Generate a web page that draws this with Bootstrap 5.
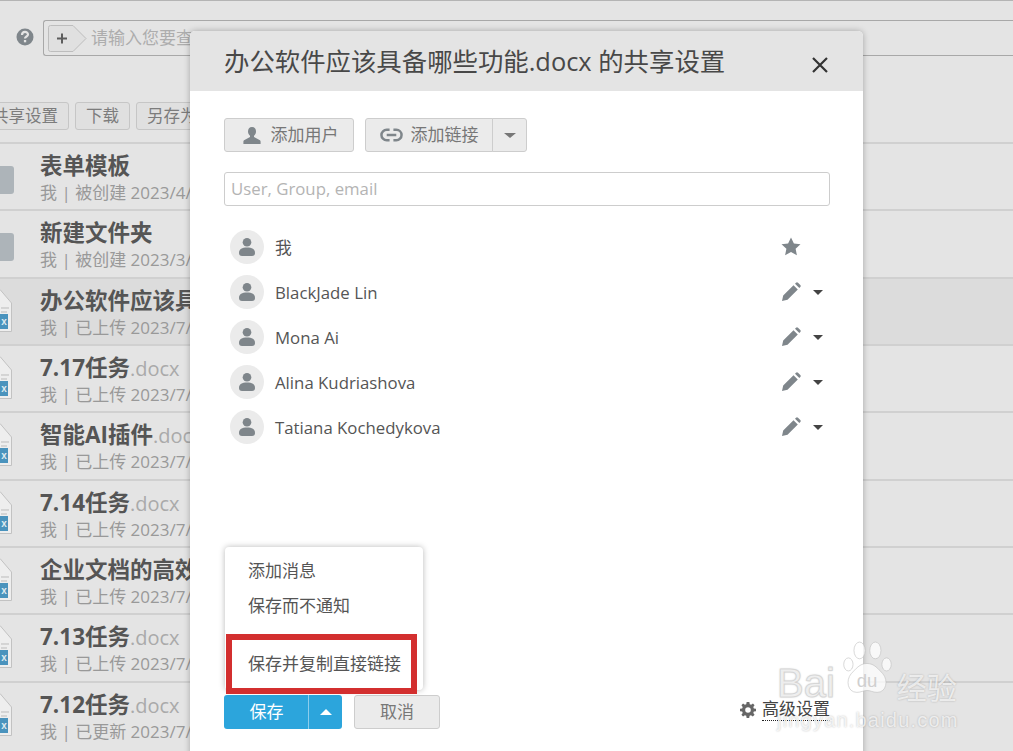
<!DOCTYPE html>
<html lang="zh-CN"><head><meta charset="utf-8"><title>共享设置</title>
<link rel="stylesheet" href="https://cdn.jsdelivr.net/npm/bootstrap@5.3.0/dist/css/bootstrap.min.css">
<style>
html,body{height:751px;overflow:hidden}
body{background:#e4e4e4;font-family:"Open Sans","Noto Sans CJK SC",sans-serif;color:#555;position:relative;border-top:1px solid #b4b4b4}
.ink{fill:#7f868b}
.searchbar{height:55px;padding-top:19px;padding-left:16px;gap:9px}
.helpicon{width:18px;height:18px;flex:none;margin-top:8px}
.searchbox{flex:1;height:36px;border:1px solid #a8a8a8;border-right:0;border-radius:3px 0 0 3px;padding:4px 4px;gap:3px;color:#adadad;font-size:17px;white-space:nowrap}
.tagplus{width:40px;height:27px;flex:none}
.toolbar{height:86px;padding-top:46px;gap:6px;margin-left:-19px}
.toolbtn{height:28px;padding:0 10px;font-size:16.5px;line-height:26px;background:#e0e0e0;border:1px solid #c6c6c6;border-radius:3px;color:#7c7c7c}
.filerow{height:67.33px;border-top:2px solid #d0d0d0;padding-left:40px;position:relative;overflow:hidden}
.filerow.picked{background:#dcdcdc}
.filename{font-size:22.5px;font-weight:700;line-height:30px;color:#555;padding-top:7px;height:39px;white-space:nowrap}
.filename span{font-weight:400;color:#aaa;font-size:20px}
.filemeta{font-size:17px;line-height:20px;color:#999;white-space:nowrap}
.fileglyph{position:absolute;left:-8px;top:10px;width:20px;height:43px}
.folderglyph{position:absolute;left:-6px;top:22px;width:20px;height:28px;border-radius:3px;background:#adb4b9}
.sharebox{position:absolute;left:190px;top:30px;width:673px;height:730px;background:#fff;border-radius:5px 5px 0 0;box-shadow:0 0 6px rgba(0,0,0,.28);display:flex;flex-direction:column}
.sharehead{height:60px;background:#e4e4e4;border-radius:5px 5px 0 0;padding:0 33px 0 34px;color:#444}
.sharetitle{font-size:25.4px;font-weight:400;margin:0;white-space:nowrap;color:#484848}
.xbtn{width:20px;height:20px;padding:0;background:none;border:0}
.sharebody{padding:27px 33px 0 34px;position:relative;flex:1}
.greybtn{height:34px;background:#ebebeb;border:1px solid #cdcdcd;border-radius:3px;color:#777;font-size:17px;padding:0 12px;line-height:30px;display:inline-flex;align-items:center;gap:8px;--bs-btn-hover-bg:#ebebeb;--bs-btn-hover-color:#777}
.userbtn{width:130px;justify-content:center;gap:10px;padding-left:15px}
.addtools{gap:11px}
.peoplefield{height:34px;margin-top:20px;width:606px;border:1px solid #cdcdcd;border-radius:3px;font-size:16.8px;padding:0 6px 2px;color:#555}
.peoplefield::placeholder{color:#b4b4b4}
.people{margin-top:18px;width:606px}
.person{height:45px;padding-left:6px;gap:11px;font-size:16.8px;color:#555}
.person>span{padding-top:2px}
.avatarcircle{width:34px;height:34px;border-radius:50%;background:#ebebeb;flex:none;display:flex;align-items:center;justify-content:center}
.rolebox{margin-left:auto;width:49px;gap:12px;display:flex;align-items:center}
.rolebox .caretdown{padding:0;margin-top:2px}
.caretdown{border-left:5.5px solid transparent;border-right:5.5px solid transparent;border-top:5.5px solid #444;width:0;height:0}
.carethalf{border-left:6px solid transparent;border-right:6px solid transparent;border-top:5px solid #777;width:0;height:0}
.caretup{border-left:6px solid transparent;border-right:6px solid transparent;border-bottom:6px solid #fff;width:0;height:0}
.bottombar{position:absolute;left:34px;right:33px;top:604px;height:34px}
.savebtn{height:34px;background:#2ca5dc;border:0;color:#fff;font-size:17px;border-radius:3px;--bs-btn-hover-bg:#2ca5dc;--bs-btn-hover-color:#fff}
.savemain{width:85px;padding:0}
.savesplit{width:34px;padding:0;border-left:1px solid #8ccdec;display:flex;align-items:center;justify-content:center}
.savemenu{display:block;position:absolute;left:35px;top:456px;width:198px;height:143px;border:0;border-radius:4px;box-shadow:0 0 6px rgba(0,0,0,.28);padding:6px 0;margin:0;min-width:0}
.saveitem{height:35px;line-height:35px;padding:0 23px;font-size:17px;color:#555;white-space:nowrap}
.redframe{position:absolute;left:36px;top:543px;width:191px;height:60px;border:6px solid #d32f2f;pointer-events:none;z-index:1001}
.advlink{margin-left:auto;font-size:17px;color:#444;gap:6px;margin-top:3px}
.advlink span{border-bottom:1px dotted #222;line-height:22px}
.baidumark{position:absolute;left:777px;top:638px;width:190px;color:rgba(255,255,255,.72);pointer-events:none;text-shadow:0 0 2px rgba(0,0,0,.25);font-family:"Liberation Sans",sans-serif;z-index:1002}
.markrow{height:62px;align-items:flex-end}
.markword{font-size:40px;line-height:1;margin-bottom:-2px;-webkit-text-stroke:1px rgba(205,205,205,.7)}
.markcn{font-size:30px;line-height:1;font-family:"Noto Sans CJK SC",sans-serif;margin-left:3px}
.markpaw{margin-left:5px}
.markurl{font-size:20px;line-height:1;letter-spacing:1.2px;margin-top:9px;white-space:nowrap}
</style></head><body>

<div class="d-flex searchbar">
  <svg class="helpicon" viewBox="0 0 18 18"><circle class="ink" cx="9" cy="9" r="8.500"/><path d="M6 7c0-4 6-4 6-.5 0 2-3 2-3 4" fill="none" stroke="#e4e4e4" stroke-width="2.200"/><rect x="7.900" y="12" width="2.300" height="2.300" fill="#e4e4e4"/></svg>
  <div class="d-flex align-items-center searchbox">
    <svg class="tagplus" viewBox="0 0 40 27"><path d="M2.500 .5H25L38 13.500 25 26.500H2.500a2 2 0 0 1-2-2V2.500a2 2 0 0 1 2-2z" fill="#e0e0e0" stroke="#bdbdbd"/><path d="M9 13.500h10M14 8.500v10" stroke="#5d5d5d" stroke-width="2"/></svg>
    <span>请输入您要查</span>
  </div>
</div>
<div class="d-flex toolbar">
  <div class="toolbtn">共享设置</div><div class="toolbtn">下载</div><div class="toolbtn">另存为</div>
</div>

<div class="filerow"><div class="folderglyph"></div><div class="filename">表单模板</div><div class="filemeta">我 | 被创建 2023/4/</div></div>
<div class="filerow"><div class="folderglyph"></div><div class="filename">新建文件夹</div><div class="filemeta">我 | 被创建 2023/3/</div></div>
<div class="filerow picked"><svg class="fileglyph" viewBox="0 0 20 43"><path d="M8 .5L19.500 14V42.500H0V.5z" fill="#eee" stroke="#c2c2c2"/><path d="M9 19h8M9 23h6" stroke="#bbb"/><rect x="0" y="25" width="16" height="15" fill="#4a93bd"/><text x="12" y="36" font-size="10" font-weight="700" fill="#dfeaf0" text-anchor="middle" font-family="Liberation Sans">x</text></svg><div class="filename">办公软件应该具备</div><div class="filemeta">我 | 已上传 2023/7/</div></div>
<div class="filerow"><svg class="fileglyph" viewBox="0 0 20 43"><path d="M8 .5L19.500 14V42.500H0V.5z" fill="#eee" stroke="#c2c2c2"/><path d="M9 19h8M9 23h6" stroke="#bbb"/><rect x="0" y="25" width="16" height="15" fill="#4a93bd"/><text x="12" y="36" font-size="10" font-weight="700" fill="#dfeaf0" text-anchor="middle" font-family="Liberation Sans">x</text></svg><div class="filename">7.17任务<span>.docx</span></div><div class="filemeta">我 | 已上传 2023/7/</div></div>
<div class="filerow"><svg class="fileglyph" viewBox="0 0 20 43"><path d="M8 .5L19.500 14V42.500H0V.5z" fill="#eee" stroke="#c2c2c2"/><path d="M9 19h8M9 23h6" stroke="#bbb"/><rect x="0" y="25" width="16" height="15" fill="#4a93bd"/><text x="12" y="36" font-size="10" font-weight="700" fill="#dfeaf0" text-anchor="middle" font-family="Liberation Sans">x</text></svg><div class="filename">智能AI插件<span>.docx</span></div><div class="filemeta">我 | 已上传 2023/7/</div></div>
<div class="filerow"><svg class="fileglyph" viewBox="0 0 20 43"><path d="M8 .5L19.500 14V42.500H0V.5z" fill="#eee" stroke="#c2c2c2"/><path d="M9 19h8M9 23h6" stroke="#bbb"/><rect x="0" y="25" width="16" height="15" fill="#4a93bd"/><text x="12" y="36" font-size="10" font-weight="700" fill="#dfeaf0" text-anchor="middle" font-family="Liberation Sans">x</text></svg><div class="filename">7.14任务<span>.docx</span></div><div class="filemeta">我 | 已上传 2023/7/</div></div>
<div class="filerow"><svg class="fileglyph" viewBox="0 0 20 43"><path d="M8 .5L19.500 14V42.500H0V.5z" fill="#eee" stroke="#c2c2c2"/><path d="M9 19h8M9 23h6" stroke="#bbb"/><rect x="0" y="25" width="16" height="15" fill="#4a93bd"/><text x="12" y="36" font-size="10" font-weight="700" fill="#dfeaf0" text-anchor="middle" font-family="Liberation Sans">x</text></svg><div class="filename">企业文档的高效管理</div><div class="filemeta">我 | 已上传 2023/7/</div></div>
<div class="filerow"><svg class="fileglyph" viewBox="0 0 20 43"><path d="M8 .5L19.500 14V42.500H0V.5z" fill="#eee" stroke="#c2c2c2"/><path d="M9 19h8M9 23h6" stroke="#bbb"/><rect x="0" y="25" width="16" height="15" fill="#4a93bd"/><text x="12" y="36" font-size="10" font-weight="700" fill="#dfeaf0" text-anchor="middle" font-family="Liberation Sans">x</text></svg><div class="filename">7.13任务<span>.docx</span></div><div class="filemeta">我 | 已上传 2023/7/</div></div>
<div class="filerow"><svg class="fileglyph" viewBox="0 0 20 43"><path d="M8 .5L19.500 14V42.500H0V.5z" fill="#eee" stroke="#c2c2c2"/><path d="M9 19h8M9 23h6" stroke="#bbb"/><rect x="0" y="25" width="16" height="15" fill="#4a93bd"/><text x="12" y="36" font-size="10" font-weight="700" fill="#dfeaf0" text-anchor="middle" font-family="Liberation Sans">x</text></svg><div class="filename">7.12任务<span>.docx</span></div><div class="filemeta">我 | 已更新 2023/7/</div></div>

<div class="sharebox">
  <div class="d-flex align-items-center justify-content-between sharehead">
    <h5 class="sharetitle">办公软件应该具备哪些功能.docx 的共享设置</h5>
    <button class="xbtn" aria-label="关闭"><svg viewBox="0 0 20 20" width="20" height="20"><path d="M3 3l14 14M17 3L3 17" stroke="#333" stroke-width="2.200"/></svg></button>
  </div>
  <div class="sharebody">
    <div class="d-flex addtools">
      <button class="btn greybtn userbtn"><svg width="18" height="17" viewBox="0 0 18 17"><path class="ink" d="M9 0c2.600 0 4 2 4 4.500 0 2-1 3.500-2 4.200v1.300l5.500 3c.8.400 1.100 1 1.100 1.700V17H.4v-2.300c0-.7.300-1.300 1.100-1.700L7 10V8.700C6 8 5 6.500 5 4.500 5 2 6.400 0 9 0z"/></svg>添加用户</button>
      <div class="btn-group">
        <button class="btn greybtn" style="width:128px;justify-content:center"><svg width="23" height="14" viewBox="0 0 24 14"><path d="M10 1.500H7a5.500 5.500 0 0 0 0 11h3M14 1.500h3a5.500 5.500 0 0 1 0 11h-3M7 7h10" fill="none" stroke="#7f868b" stroke-width="2.600"/></svg>添加链接</button>
        <button class="btn greybtn" style="width:35px;padding:0;justify-content:center" aria-label="更多"><span class="carethalf"></span></button>
      </div>
    </div>
    <input class="form-control peoplefield" placeholder="User, Group, email">
    <div class="people">
      <div class="d-flex align-items-center person"><div class="avatarcircle"><svg width="16" height="18" viewBox="0 0 16 18"><circle class="ink" cx="8" cy="4.300" r="4.300"/><path class="ink" d="M0 15c0-4 3-5.500 8-5.500s8 1.500 8 5.500c0 2-1 3-3 3H3c-2 0-3-1-3-3z"/></svg></div><span>我</span><div class="rolebox"><svg width="20" height="19" viewBox="0 0 20 19"><path class="ink" d="M10 .5l2.900 6 6.600.8-4.900 4.500 1.300 6.500L10 15.100 4.100 18.300l1.300-6.500L.5 7.300l6.600-.8z"/></svg></div></div>
      <div class="d-flex align-items-center person"><div class="avatarcircle"><svg width="16" height="18" viewBox="0 0 16 18"><circle class="ink" cx="8" cy="4.300" r="4.300"/><path class="ink" d="M0 15c0-4 3-5.500 8-5.500s8 1.500 8 5.500c0 2-1 3-3 3H3c-2 0-3-1-3-3z"/></svg></div><span>BlackJade Lin</span><div class="rolebox"><svg width="20" height="20" viewBox="0 0 20 20"><path class="ink" d="M1 19l1.200-5.500L12.500 3.200l4.300 4.300L6.500 17.800zM14 1.700l1-1a1.500 1.500 0 0 1 2 0l2.300 2.300a1.500 1.500 0 0 1 0 2l-1 1z"/></svg><span class="caretdown"></span></div></div>
      <div class="d-flex align-items-center person"><div class="avatarcircle"><svg width="16" height="18" viewBox="0 0 16 18"><circle class="ink" cx="8" cy="4.300" r="4.300"/><path class="ink" d="M0 15c0-4 3-5.500 8-5.500s8 1.500 8 5.500c0 2-1 3-3 3H3c-2 0-3-1-3-3z"/></svg></div><span>Mona Ai</span><div class="rolebox"><svg width="20" height="20" viewBox="0 0 20 20"><path class="ink" d="M1 19l1.200-5.500L12.500 3.200l4.300 4.300L6.500 17.800zM14 1.700l1-1a1.500 1.500 0 0 1 2 0l2.300 2.300a1.500 1.500 0 0 1 0 2l-1 1z"/></svg><span class="caretdown"></span></div></div>
      <div class="d-flex align-items-center person"><div class="avatarcircle"><svg width="16" height="18" viewBox="0 0 16 18"><circle class="ink" cx="8" cy="4.300" r="4.300"/><path class="ink" d="M0 15c0-4 3-5.500 8-5.500s8 1.500 8 5.500c0 2-1 3-3 3H3c-2 0-3-1-3-3z"/></svg></div><span>Alina Kudriashova</span><div class="rolebox"><svg width="20" height="20" viewBox="0 0 20 20"><path class="ink" d="M1 19l1.200-5.500L12.500 3.200l4.300 4.300L6.500 17.800zM14 1.700l1-1a1.500 1.500 0 0 1 2 0l2.300 2.300a1.500 1.500 0 0 1 0 2l-1 1z"/></svg><span class="caretdown"></span></div></div>
      <div class="d-flex align-items-center person"><div class="avatarcircle"><svg width="16" height="18" viewBox="0 0 16 18"><circle class="ink" cx="8" cy="4.300" r="4.300"/><path class="ink" d="M0 15c0-4 3-5.500 8-5.500s8 1.500 8 5.500c0 2-1 3-3 3H3c-2 0-3-1-3-3z"/></svg></div><span>Tatiana Kochedykova</span><div class="rolebox"><svg width="20" height="20" viewBox="0 0 20 20"><path class="ink" d="M1 19l1.200-5.500L12.500 3.200l4.300 4.300L6.500 17.800zM14 1.700l1-1a1.500 1.500 0 0 1 2 0l2.300 2.300a1.500 1.500 0 0 1 0 2l-1 1z"/></svg><span class="caretdown"></span></div></div>
    </div>

    <div class="dropdown-menu savemenu">
      <div class="saveitem">添加消息</div>
      <div class="saveitem">保存而不通知</div>
      <div class="saveitem" style="margin-top:23px">保存并复制直接链接</div>
    </div>
    <div class="redframe"></div>

    <div class="d-flex align-items-start bottombar">
      <div class="btn-group">
        <button class="btn savebtn savemain">保存</button>
        <button class="btn savebtn savesplit" aria-label="展开"><span class="caretup"></span></button>
      </div>
      <button class="btn greybtn" style="margin-left:12px;width:86px;justify-content:center">取消</button>
      <div class="d-flex align-items-center advlink">
        <svg width="16" height="16" viewBox="0 0 20 20"><path fill="#666" fill-rule="evenodd" d="M8.300 0h3.400l.5 2.800 1.700.7L16.200 2l2 2-1.600 2.300.7 1.700 2.700.5v3l-2.700.5-.7 1.700 1.600 2.300-2.200 2.200-2.300-1.600-1.700.7-.5 2.700H8.300l-.5-2.700-1.700-.7L3.800 18l-2-2 1.600-2.300-.7-1.700L0 11.500v-3l2.700-.5.700-1.700L1.800 4l2-2 2.300 1.500 1.700-.7zM10 6.500a3.500 3.500 0 1 0 0 7 3.500 3.500 0 0 0 0-7z"/></svg>
        <span>高级设置</span>
      </div>
    </div>
  </div>
</div>

<div class="baidumark">
  <div class="d-flex markrow">
    <span class="markword">Bai</span>
    <svg class="markpaw" width="54" height="62" viewBox="0 0 58 62"><g fill="#fff" fill-opacity=".75" stroke="#bbb" stroke-width=".6"><ellipse cx="9" cy="25" rx="5" ry="7"/><ellipse cx="21" cy="10" rx="6" ry="9"/><ellipse cx="38" cy="10" rx="6" ry="9"/><ellipse cx="50" cy="25" rx="5" ry="7"/><path d="M29 24c8 0 12 6 17 11 6 7 4 20-6 20-5 0-7-2-11-2s-6 2-11 2c-10 0-12-13-6-20 5-5 9-11 17-11z"/></g><text x="29" y="49" font-size="20" text-anchor="middle" fill="#cfcfcf" style="text-shadow:none">du</text></svg>
    <span class="markcn">经验</span>
  </div>
  <div class="markurl">jingyan.baidu.com</div>
</div>
</body></html>
